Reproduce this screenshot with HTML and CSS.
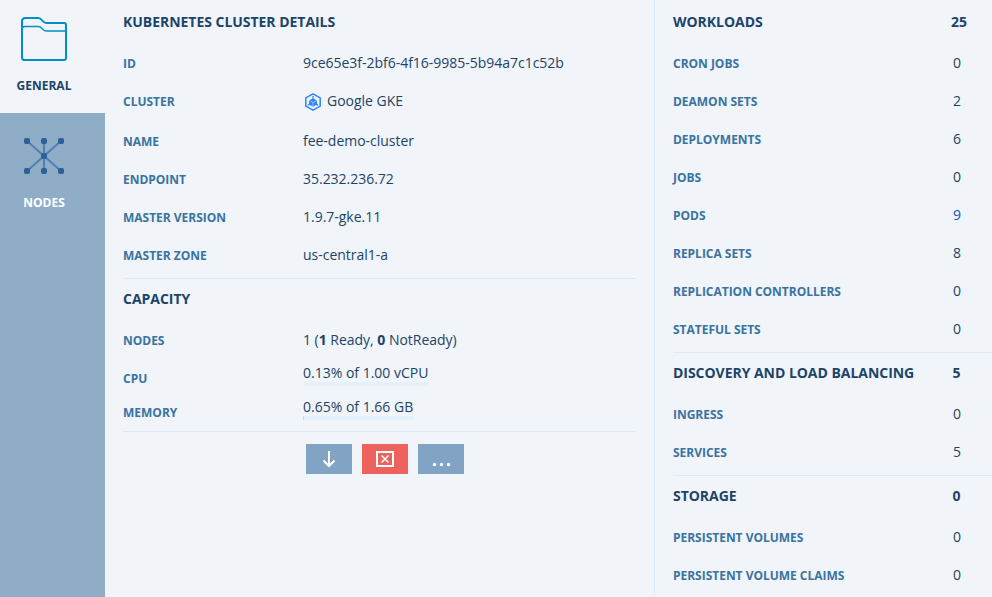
FILE: index.html
```html
<!DOCTYPE html>
<html lang="en">
<head>
<meta charset="utf-8">
<title>Kubernetes Cluster Details</title>
<link rel="stylesheet" href="styles.css">
</head>
<body>
<div class="app">
  <nav class="sidebar">
    <a class="tab tab-active">
      <svg class="tab-icon" width="50" height="50" viewBox="0 0 50 50" fill="none" stroke="#008fc5">
        <path stroke-width="2" d="M3 43V7.500Q3 4 6.500 4H19.500C23 4 23.500 9 27 9H45Q47 9 47 11V44Q47 46 45 46H5Q3 46 3 43Z"/>
        <path stroke-width="1.300" d="M3 15Q3 12.500 6 12.500H19.500C23 12.500 23.500 17 27 17H47"/>
      </svg>
      <span class="tab-label">GENERAL</span>
    </a>
    <a class="tab">
      <svg class="tab-icon" width="50" height="50" viewBox="0 0 50 50">
        <path stroke="#4f80b0" stroke-width="2" fill="none" d="M8 11L42 41M42 11L8 41M25 11V41"/>
        <g fill="#286299">
          <rect x="5" y="8" width="6" height="6" rx="2"/><rect x="22" y="8" width="6" height="6" rx="2"/><rect x="39" y="8" width="6" height="6" rx="2"/>
          <rect x="22" y="23" width="6" height="6" rx="2"/>
          <rect x="5" y="38" width="6" height="6" rx="2"/><rect x="22" y="38" width="6" height="6" rx="2"/><rect x="39" y="38" width="6" height="6" rx="2"/>
        </g>
      </svg>
      <span class="tab-label">NODES</span>
    </a>
  </nav>

  <main class="details">
    <section class="group">
      <h2 class="title">KUBERNETES CLUSTER DETAILS</h2>
      <div class="row"><span class="label">ID</span><span class="value">9ce65e3f-2bf6-4f16-9985-5b94a7c1c52b</span></div>
      <div class="row row-provider"><span class="label">CLUSTER</span><span class="value value-icon">
        <svg class="provider-icon" width="20" height="20" viewBox="0 0 20 20">
          <path fill="none" stroke="#2e86f7" stroke-width="1.500" d="M10 1.800L17.200 5.900V14.100L10 18.200L2.800 14.100V5.900Z"/>
          <path fill="#2e86f7" d="M9.400 4h1.200v2.400L14 8.400v3.400l1.500 1-.6 1-1.600-.9L10 14.700l-3.300-1.800-1.600.9-.6-1L6 11.800V8.400l3.400-2Z"/>
          <path fill="none" stroke="#f1f4f9" stroke-width=".5" d="M6.200 8.400L10 10.500L13.800 8.400M10 10.500V14.500"/>
        </svg>Google GKE</span></div>
      <div class="row"><span class="label">NAME</span><span class="value">fee-demo-cluster</span></div>
      <div class="row"><span class="label">ENDPOINT</span><span class="value">35.232.236.72</span></div>
      <div class="row"><span class="label">MASTER VERSION</span><span class="value">1.9.7-gke.11</span></div>
      <div class="row"><span class="label">MASTER ZONE</span><span class="value">us-central1-a</span></div>
    </section>
    <section class="group capacity">
      <h2 class="title">CAPACITY</h2>
      <div class="row"><span class="label">NODES</span><span class="value">1 (<b>1</b> Ready, <b>0</b> NotReady)</span></div>
      <div class="row row-meter"><span class="label">CPU</span><span class="meter">0.13% of 1.00 vCPU<span class="track"></span></span></div>
      <div class="row row-meter"><span class="label">MEMORY</span><span class="meter">0.65% of 1.66 GB<span class="track"><span class="fill"></span></span></span></div>
    </section>
    <div class="actions">
      <button class="button" aria-label="Download">
        <svg width="46" height="30" viewBox="0 0 46 30" fill="none" stroke="#fff" stroke-width="2"><path d="M23 7V22M17.500 16.500L23 22L28.500 16.500"/></svg>
      </button>
      <button class="button button-danger" aria-label="Delete">
        <svg width="46" height="30" viewBox="0 0 46 30" fill="none" stroke="#fff"><rect x="15" y="8" width="16" height="14" stroke-width="2"/><path stroke-width="1.600" d="M19.500 11.500L26.500 18.500M26.500 11.500L19.500 18.500"/></svg>
      </button>
      <button class="button" aria-label="More">
        <svg width="46" height="30" viewBox="0 0 46 30" fill="#fff"><circle cx="16.500" cy="20.500" r="1.700"/><circle cx="23.500" cy="20.500" r="1.700"/><circle cx="30.500" cy="20.500" r="1.700"/></svg>
      </button>
    </div>
  </main>

  <aside class="resources">
    <section class="group">
      <h2 class="title"><span>WORKLOADS</span><span class="total total-wide">25</span></h2>
      <div class="row"><span class="label">CRON JOBS</span><span class="count">0</span></div>
      <div class="row"><span class="label">DEAMON SETS</span><span class="count">2</span></div>
      <div class="row"><span class="label">DEPLOYMENTS</span><span class="count">6</span></div>
      <div class="row"><span class="label">JOBS</span><span class="count">0</span></div>
      <div class="row"><span class="label">PODS</span><span class="count count-link">9</span></div>
      <div class="row"><span class="label">REPLICA SETS</span><span class="count">8</span></div>
      <div class="row"><span class="label">REPLICATION CONTROLLERS</span><span class="count">0</span></div>
      <div class="row"><span class="label">STATEFUL SETS</span><span class="count">0</span></div>
    </section>
    <section class="group">
      <h2 class="title"><span>DISCOVERY AND LOAD BALANCING</span><span class="total">5</span></h2>
      <div class="row"><span class="label">INGRESS</span><span class="count">0</span></div>
      <div class="row"><span class="label">SERVICES</span><span class="count">5</span></div>
    </section>
    <section class="group">
      <h2 class="title"><span>STORAGE</span><span class="total">0</span></h2>
      <div class="row"><span class="label">PERSISTENT VOLUMES</span><span class="count">0</span></div>
      <div class="row"><span class="label">PERSISTENT VOLUME CLAIMS</span><span class="count">0</span></div>
    </section>
  </aside>
</div>
</body>
</html>
```
FILE: styles.css
```css
* { box-sizing: border-box; }
body {
  margin: 0;
  background: #f1f4f9;
  color: #1c4468;
  font: 14px/20px "Open Sans", "Noto Sans", sans-serif;
}
.app { display: flex; height: 597px; overflow: hidden; }

.sidebar { width: 105px; background: #90adc8; }
.tab {
  display: flex;
  flex-direction: column;
  align-items: center;
  height: 117px;
  padding: 17px 17px 0 0;
  color: #fff;
}
.tab-active {
  height: 113px;
  padding-top: 14px;
  background: #f1f4f9;
  color: #1c4468;
}
.tab-icon { display: block; }
.tab-label { margin-top: 14px; font-size: 12px; font-weight: 700; line-height: 18px; }
.tab-active .tab-label { margin-top: 13px; }

.details { width: 549px; padding: 0 18px; }
.resources { flex: 1; padding-left: 18px; border-left: 1px solid #dce9f7; }

.group { padding-bottom: 4px; border-bottom: 1px solid #dce9f7; }
.title {
  display: flex;
  align-items: center;
  height: 44px;
  margin: 0;
  font-size: 14px;
  font-weight: 700;
  letter-spacing: -0.035px;
}
.group + .group .title { height: 42px; padding-bottom: 2px; }
.row { display: flex; align-items: center; height: 38px; letter-spacing: -0.02px; }
.row-provider { height: 40px; padding-bottom: 2px; }
.label { width: 180px; padding-top: 2px; color: #39739f; font-size: 12px; font-weight: 700; line-height: 18px; }
.value-icon { display: flex; align-items: center; gap: 4px; }
.provider-icon { margin-top: 2px; }

.row-meter { height: 34px; letter-spacing: 0; }
.row-meter .label { padding-top: 6px; }
.meter { margin-top: -3px; line-height: 20px; }
.track { display: block; height: 4px; margin-top: -1px; background: #e6f0fb; }
.fill { display: block; width: 0.650%; min-width: 1px; height: 4px; background: #b5efa5; }
.capacity { padding-bottom: 4px; }

.actions { display: flex; gap: 10px; margin: 12px 0 0 183px; }
.button { width: 46px; height: 30px; padding: 0; border: 0; background: #82a4c4; }
.button svg { display: block; }
.button-danger { background: #ee625e; }

.resources .title, .resources .row { justify-content: space-between; }
.resources .label { width: auto; }
.total, .count { width: 66px; padding-right: 4px; text-align: center; }
.total { padding-right: 5px; }
.total-wide { padding-right: 0; }
.count-link { color: #0f55c4; }
```
